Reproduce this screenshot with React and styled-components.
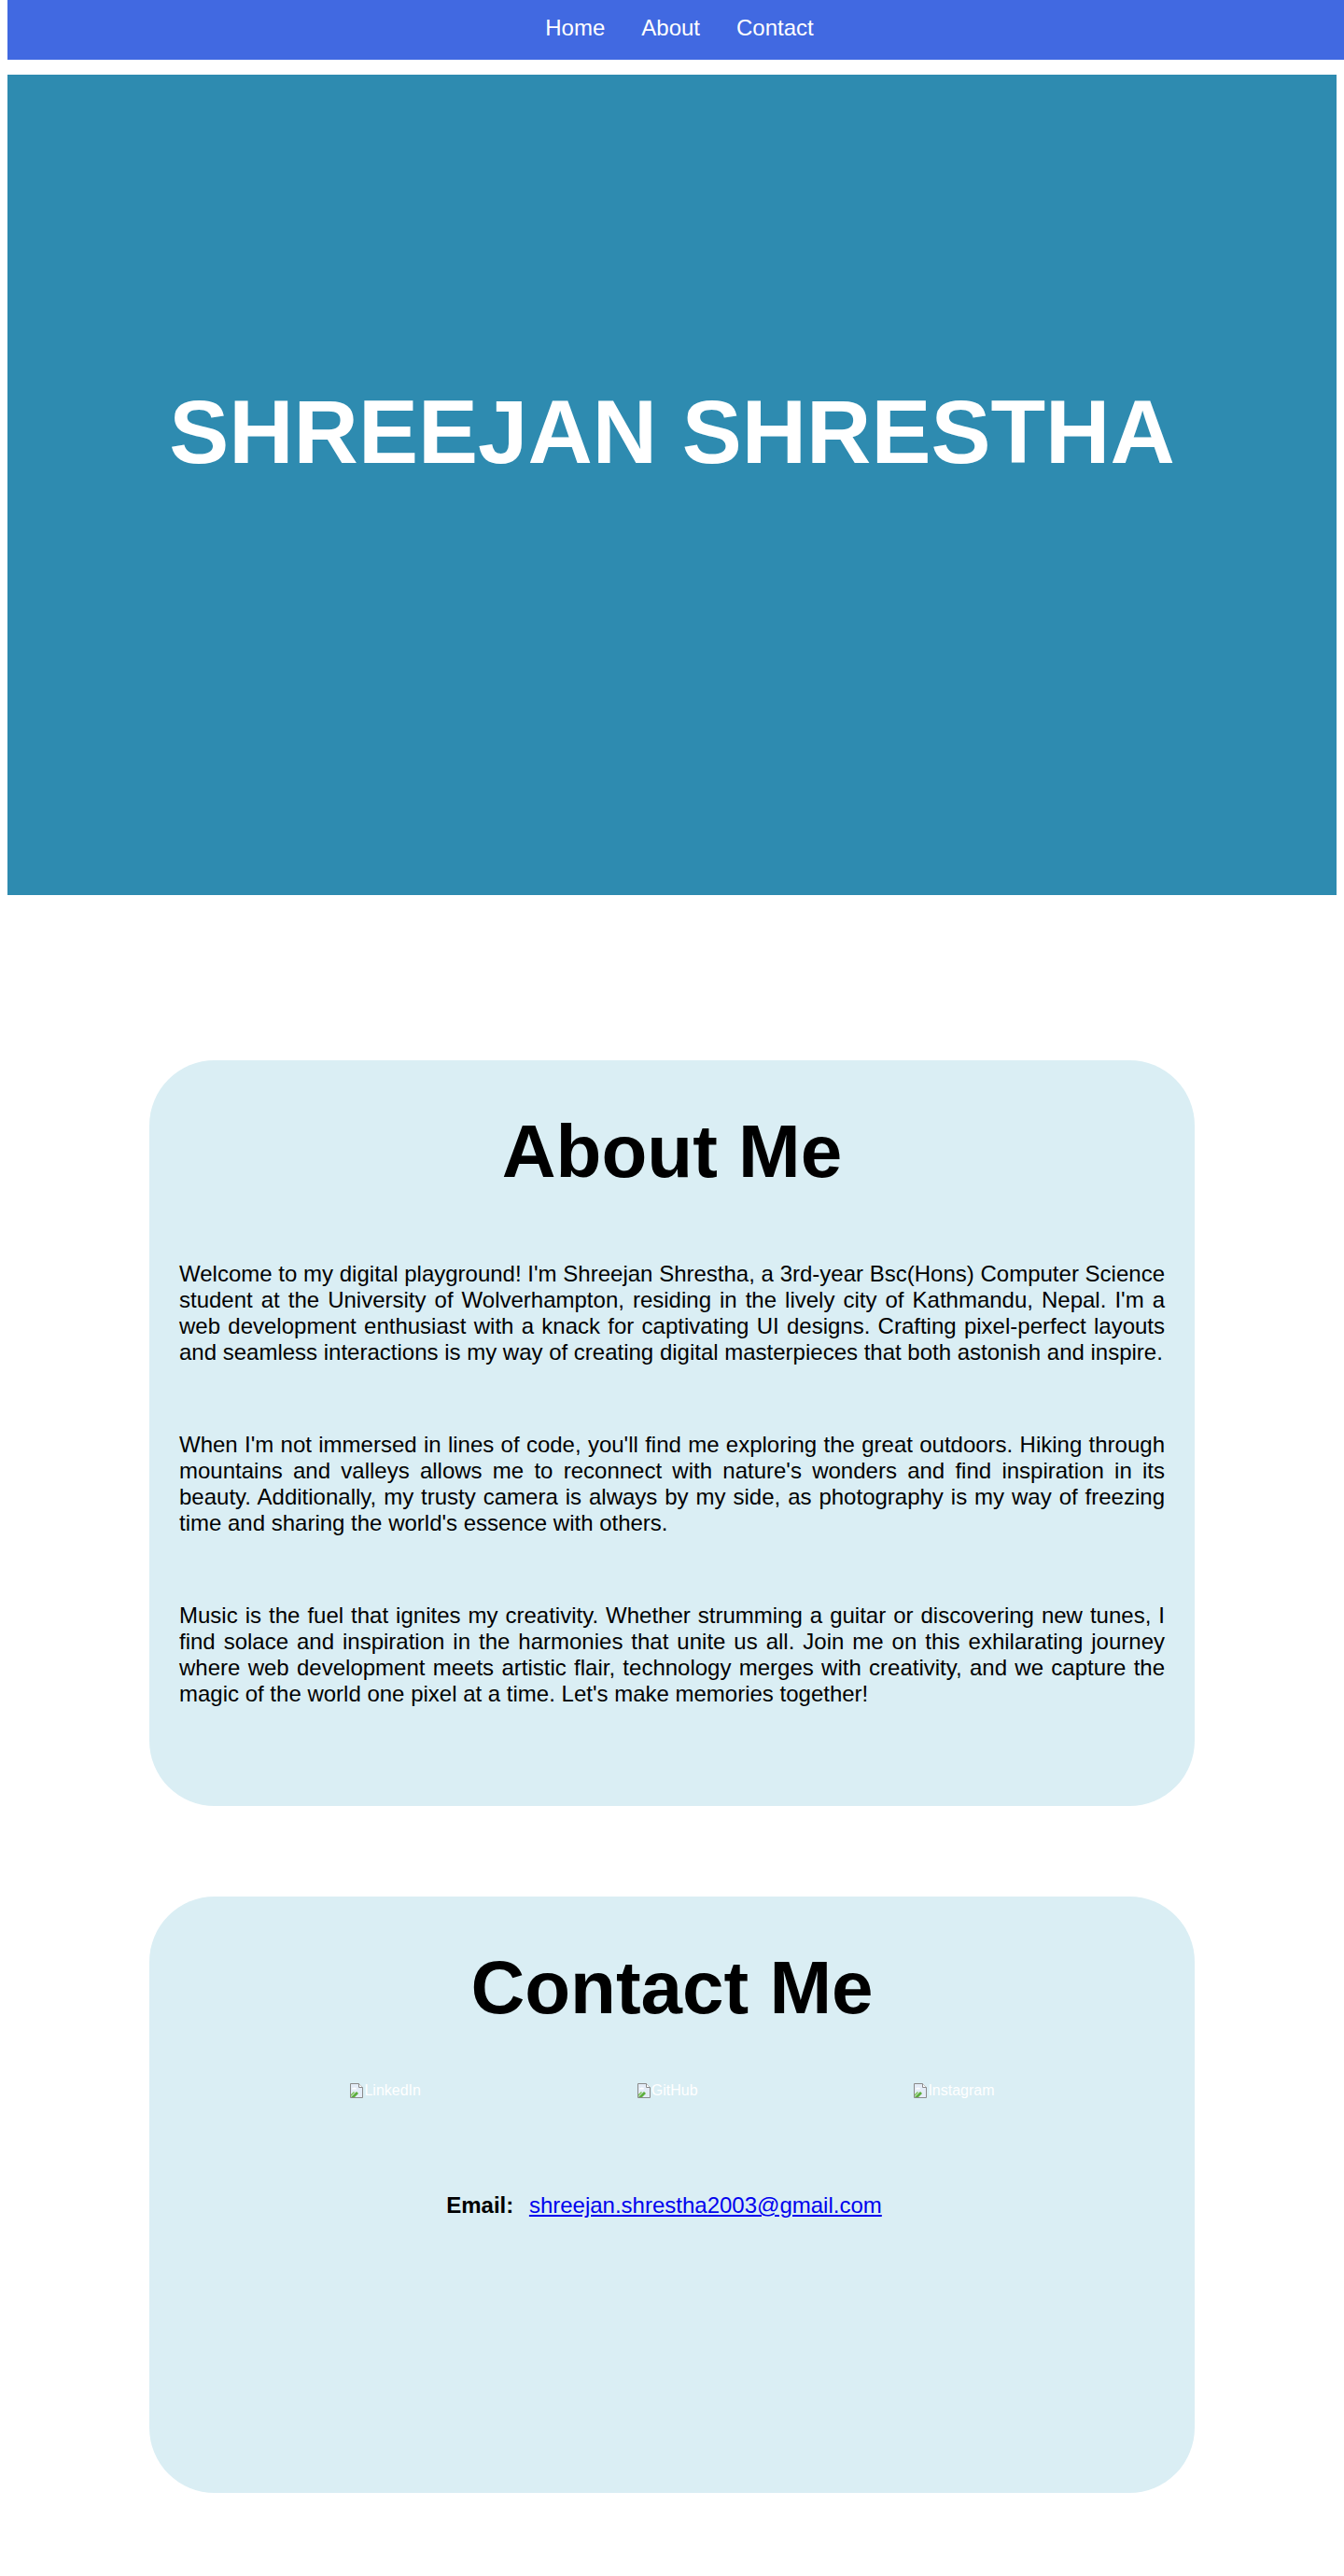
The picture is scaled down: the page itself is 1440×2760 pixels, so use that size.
import React from "react";
import styled, { createGlobalStyle } from "styled-components";

const GlobalStyle = createGlobalStyle`
  body {
    margin: 8px;
    font-family: "Liberation Sans", Arial, sans-serif;
    background: #fff;
  }
`;

const NavBar = styled.nav`
  position: fixed;
  top: 0;
  box-sizing: border-box;
  width: 100%;
  height: 64px;
  padding-bottom: 5px;
  background-color: royalblue;
  display: flex;
  justify-content: center;
  align-items: center;
  z-index: 10;
`;

const NavLink = styled.a`
  color: #fff;
  font-size: 24px;
  text-decoration: none;
  margin: 0 19.5px;
`;

const Hero = styled.header`
  box-sizing: border-box;
  margin-top: 72px;
  height: 879px;
  padding-top: 328px;
  background-color: #2e8bb0;
  text-align: center;
`;

const HeroTitle = styled.h1`
  margin: 0;
  color: #fff;
  font-size: 96px;
  font-weight: bold;
`;

const Card = styled.section`
  box-sizing: border-box;
  width: 1120px;
  margin: ${(p) => p.$top}px auto 0;
  padding: 52px 32px ${(p) => p.$bottom || 0}px;
  height: ${(p) => (p.$height ? `${p.$height}px` : "auto")};
  background-color: #daeef4;
  border-radius: 70px;
`;

const CardTitle = styled.h1`
  margin: 0;
  font-size: 80px;
  font-weight: bold;
  text-align: center;
  color: #000;
`;

const Paragraph = styled.p`
  margin: 71px 0;
  font-size: 24px;
  text-align: justify;
  color: #000;
`;

const SocialRow = styled.div`
  width: 922px;
  margin: 55px auto 0;
  display: flex;
  justify-content: space-around;
`;

const SocialLink = styled.a`
  display: inline-flex;
  align-items: center;
  color: #fff;
  font-size: 16px;
  text-decoration: none;
  line-height: 18px;
`;

const EmailRow = styled.p`
  margin: 100px 0 0;
  font-size: 24px;
  text-align: center;
`;

const EmailLabel = styled.strong`
  margin-right: 10px;
  color: #000;
`;

const EmailLink = styled.a`
  color: #0000ee;
  margin-right: 17px;
`;

function BrokenImage() {
  return (
    <svg width="16" height="16" viewBox="0 0 16 16">
      <path d="M1.5 0.5h9l4 4v11h-13z" fill="#e4ecf7" stroke="#8a8a8a" />
      <path d="M10.5 0.5v4h4" fill="#fff" stroke="#8a8a8a" />
      <path d="M3 6.5c0-1.2 1-1.8 1.8-1.4 0.4-0.8 1.6-0.8 2 0 0.8-0.2 1.4 0.6 1 1.4z" fill="#fff" />
      <path d="M2 15l6-6 2 2-4 4z" fill="#5cae3c" />
      <path d="M2 12l3-3 1 1-4 4z" fill="#7cc354" />
    </svg>
  );
}

const paragraphs = [
  "Welcome to my digital playground! I'm Shreejan Shrestha, a 3rd-year Bsc(Hons) Computer Science student at the University of Wolverhampton, residing in the lively city of Kathmandu, Nepal. I'm a web development enthusiast with a knack for captivating UI designs. Crafting pixel-perfect layouts and seamless interactions is my way of creating digital masterpieces that both astonish and inspire.",
  "When I'm not immersed in lines of code, you'll find me exploring the great outdoors. Hiking through mountains and valleys allows me to reconnect with nature's wonders and find inspiration in its beauty. Additionally, my trusty camera is always by my side, as photography is my way of freezing time and sharing the world's essence with others.",
  "Music is the fuel that ignites my creativity. Whether strumming a guitar or discovering new tunes, I find solace and inspiration in the harmonies that unite us all. Join me on this exhilarating journey where web development meets artistic flair, technology merges with creativity, and we capture the magic of the world one pixel at a time. Let's make memories together!",
];

const socials = ["LinkedIn", "GitHub", "Instagram"];

export default function App() {
  return (
    <>
      <GlobalStyle />
      <NavBar>
        <NavLink href="#home">Home</NavLink>
        <NavLink href="#about">About</NavLink>
        <NavLink href="#contact">Contact</NavLink>
      </NavBar>

      <Hero id="home">
        <HeroTitle>SHREEJAN SHRESTHA</HeroTitle>
      </Hero>

      <Card id="about" $top={177} $bottom={35}>
        <CardTitle>About Me</CardTitle>
        {paragraphs.map((text, i) => (
          <Paragraph key={i}>{text}</Paragraph>
        ))}
      </Card>

      <Card id="contact" $top={97} $height={639}>
        <CardTitle>Contact Me</CardTitle>
        <SocialRow>
          {socials.map((name) => (
            <SocialLink key={name} href="#">
              <BrokenImage />
              {name}
            </SocialLink>
          ))}
        </SocialRow>
        <EmailRow>
          <EmailLabel>Email:</EmailLabel>{" "}
          <EmailLink href="mailto:shreejan.shrestha2003@gmail.com">
            shreejan.shrestha2003@gmail.com
          </EmailLink>
        </EmailRow>
      </Card>
    </>
  );
}
